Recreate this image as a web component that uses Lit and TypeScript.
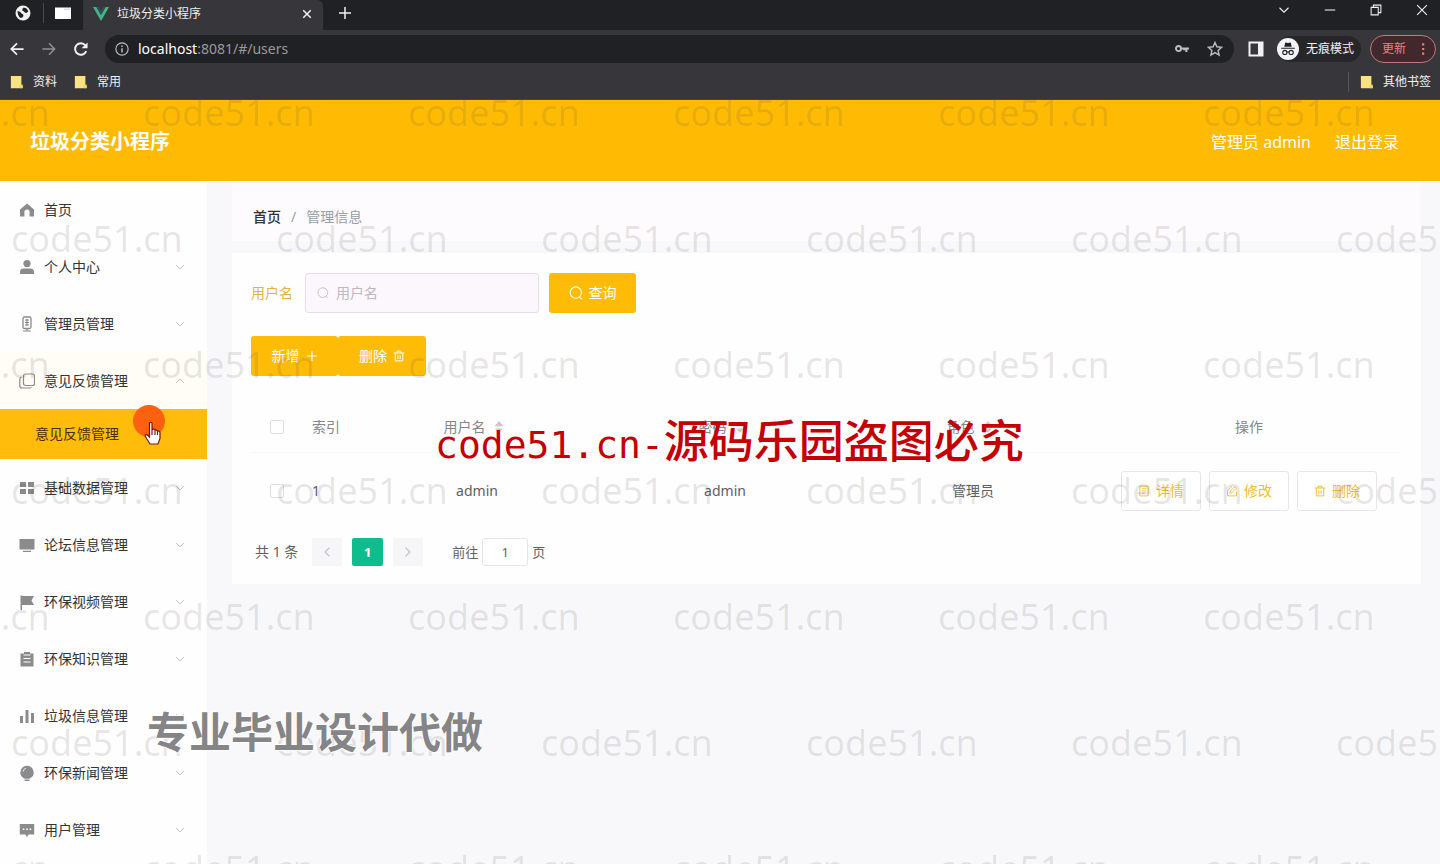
import { LitElement, html, css, svg, TemplateResult } from "lit";
import { customElement } from "lit/decorators.js";
import { classMap } from "lit/directives/class-map.js";

const shapes: Record<string, TemplateResult> = {
  home: svg`<path d="M8 1.500 1 7.600v6.900h4.400V10a2.600 2.600 0 0 1 5.200 0v4.500H15V7.600z" fill="currentColor"/>`,
  user: svg`<circle cx="8" cy="4.600" r="3.600" fill="currentColor"/><path d="M1 15v-2.200C1 10.600 2.800 9.500 4.600 9.500h6.800C13.200 9.500 15 10.600 15 12.800V15z" fill="currentColor"/>`,
  mic: svg`<rect x="4" y="1" width="8" height="11.500" rx="1.500" fill="none" stroke="currentColor" stroke-width="1.300"/><path d="M6 4h4M6 6.500h4M6 9h4M8 3v7M4 15h8M8 12v3" stroke="currentColor" stroke-width="1.200"/>`,
  copy: svg`<rect x="4.500" y="1" width="11" height="11.500" rx="2" fill="none" stroke="currentColor" stroke-width="1.200"/><path d="M2.500 4Q.8 4.500.8 6.500v6.200q0 2.300 2.300 2.300h7.400q1.500 0 2-.8" fill="none" stroke="currentColor" stroke-width="1.200"/>`,
  grid: svg`<path d="M1 2h6v5H1zM9 2h6v5H9zM1 9h6v5H1zM9 9h6v5H9z" fill="currentColor"/>`,
  monitor: svg`<path d="M.5 2h15v10.500H.5zM4 13.800h8v1.200H4z" fill="currentColor"/>`,
  flag: svg`<path d="M1.500 1.500H3V16H1.500zM3 2h12l-2.500 4.500L15 11H3z" fill="currentColor"/>`,
  clip: svg`<path d="M1.500 2.500H5V1h6v1.500h3.500v13h-13z" fill="currentColor"/><path d="M4.500 4h7M4.500 7.500h7M4.500 11h7" stroke="#fff"/>`,
  bars: svg`<path d="M1 8h3v7H1zM6.500 2h3v13h-3zM12 5h3v10h-3z" fill="currentColor"/>`,
  bulb: svg`<path d="M8 .8a6.700 6.700 0 0 0-4 12l1.800 1h4.400l1.800-1A6.700 6.700 0 0 0 8 .8zM5.500 14.600h5V16h-5z" fill="currentColor"/><path d="M4 6.500Q4.500 4 7 3.300" fill="none" stroke="#fff" stroke-width=".8"/>`,
  chat: svg`<path d="M.8 2h14.400v10.500H9.600L8 15l-1.600-2.500H.8z" fill="currentColor"/><path d="M3.800 7.200h1.600M7.200 7.200h1.600M10.600 7.200h1.600" stroke="#fff" stroke-width="1.500"/>`,
  down: svg`<path d="m2 5 6 6 6-6" fill="none" stroke="currentColor" stroke-width="1.500"/>`,
  up: svg`<path d="m2 11 6-6 6 6" fill="none" stroke="currentColor" stroke-width="1.500"/>`,
  left: svg`<path d="m12 1-7 7 7 7" fill="none" stroke="currentColor" stroke-width="2"/>`,
  right: svg`<path d="m4 1 7 7-7 7" fill="none" stroke="currentColor" stroke-width="2"/>`,
  search: svg`<circle cx="7.800" cy="7.500" r="6.500" fill="none" stroke="currentColor" stroke-width="1.200"/><path d="m11.500 12 3 3" stroke="currentColor" stroke-width="1.200"/>`,
  plus: svg`<path d="M8 1.500v13M1.500 8h13" stroke="currentColor" stroke-width="1.500"/>`,
  trash: svg`<path d="M1 4h14M5.500 4V1.500h5V4M3 4v10.500h10V4M6.500 7v5M9.500 7v5" fill="none" stroke="currentColor" stroke-width="1.300"/>`,
  doc: svg`<path d="M2.500 1.500h11v13h-11zM5 5h6M5 8h6M5 11h4" fill="none" stroke="currentColor" stroke-width="1.200"/>`,
  edit: svg`<path d="m8 2-6 5v7.500h12V9M5 11l1-3 5.500-5.500 2 2L8 10z" fill="none" stroke="currentColor" stroke-width="1.200"/>`,
  globe: svg`<circle cx="8" cy="8" r="7.500" fill="#f1f1f1"/><path d="M2.500 6q3 0 4 2.500 2 0 2 2.500-1.500 2.500-3 2Q2.500 10.500 2.500 6zM8 2.800Q12 2 13.300 6.500 11 9 9.500 7T7 5.500z" fill="#202124"/>`,
  window: svg`<path d="M0 2.500h16v11.500H0z" fill="#fff"/><path d="M9 4.200h6" stroke="#ccc"/>`,
  vue: svg`<path d="M0 1h3.400L8 9l4.600-8H16L8 15z" fill="#41b883"/><path d="M3.400 1H6l2 3.600L10 1h2.600L8 9z" fill="#35495e"/>`,
  close: svg`<path d="m3 3 10 10M13 3 3 13" stroke="currentColor" stroke-width="2"/>`,
  add: svg`<path d="M8 0v16M0 8h16" stroke="currentColor" stroke-width="2"/>`,
  back: svg`<path d="M15.500 8H2M8 1.500 1.500 8 8 14.500" fill="none" stroke="currentColor" stroke-width="2"/>`,
  forward: svg`<path d="M.5 8H14M8 1.500 14.500 8 8 14.500" fill="none" stroke="currentColor" stroke-width="1.700"/>`,
  reload: svg`<path d="M14 10.500A6.600 6.600 0 1 1 13 3.800" fill="none" stroke="currentColor" stroke-width="2.200"/><path d="M15.500.5v6.700H8.600z" fill="currentColor"/>`,
  info: svg`<circle cx="8" cy="8" r="7" fill="none" stroke="currentColor" stroke-width="1.300"/><path d="M8 7v5M8 4v1.700" stroke="currentColor" stroke-width="1.700"/>`,
  key: svg`<circle cx="4" cy="7.500" r="2.900" fill="none" stroke="currentColor" stroke-width="2.200"/><path d="M7 7.500h9M13 7.500v4M10.500 7.500v2" stroke="currentColor" stroke-width="2.400"/>`,
  star: svg`<path d="m8 1.500 1.900 4.300 4.700.5-3.500 3.100 1 4.600L8 11.600 3.900 14l1-4.600L1.400 6.300l4.700-.5z" fill="none" stroke="currentColor" stroke-width="1.400"/>`,
  panel: svg`<path d="M1.500 1.500h13v13h-13z" fill="none" stroke="currentColor" stroke-width="2"/><path d="M10 1.500h5v13h-5z" fill="currentColor"/>`,
  spy: svg`<circle cx="8" cy="8" r="8" fill="#f1f3f4"/><path d="M5.300 6.300 6 3.200l2 .4 2-.4.700 3.100zM3 7h10v.9H3z" fill="#202124"/><g fill="none" stroke="#202124" stroke-width=".8"><circle cx="5.700" cy="10.500" r="1.500"/><circle cx="10.300" cy="10.500" r="1.500"/><path d="M7.200 10.200h1.600"/></g>`,
  folder: svg`<path d="M1 1h12v10l1.500 1v3H1z" fill="#fbe384"/><path d="M11 11h3.500v4H11z" fill="#f2d361"/>`,
  min: svg`<path d="M1 8h14" stroke="currentColor" stroke-width="1.400"/>`,
  restore: svg`<path d="M1.500 4.500h9.500v10H1.500zM4.500 4.500V1.500h10V11.500H11" fill="none" stroke="currentColor" stroke-width="1.400"/>`,
  cross: svg`<path d="m1.500 1.500 13 13M14.500 1.500 1.500 14.500" stroke="currentColor" stroke-width="1.500"/>`,
  dots: svg`<path d="M7 1.500h2.400v2.400H7zM7 6.800h2.400v2.400H7zM7 12.100h2.400v2.400H7z" fill="currentColor"/>`,
  sort: svg`<path d="m8 0 6 7H2zM8 16l5-6H3z" fill="currentColor"/>`,
};

const icon = (name: string, size = "") =>
  html`<svg class=${"icon " + size} viewBox="0 0 16 16" aria-hidden="true">${shapes[name]}</svg>`;

const base = css`
  * { box-sizing: border-box; }
  button, input { font: inherit; color: inherit; margin: 0; }
  button { border: 0; padding: 0; background: none; cursor: pointer; }
  a { color: inherit; text-decoration: none; }
  .icon { width: 14px; height: 14px; flex: none; display: block; }
  .s10 { width: 10px; height: 10px; }
  .s12 { width: 12px; height: 12px; }
  .s16 { width: 16px; height: 16px; }
  .s22 { width: 22px; height: 22px; }
`;

@customElement("browser-bar")
class BrowserBar extends LitElement {
  static styles = [base, css`
    :host { display: block; background: #37373b; color: #f1f1f3; font-size: 12px; }
    .tabs { display: flex; height: 30px; background: #202124; }
    .pins { display: flex; align-items: center; width: 83px; padding: 0 12px 4px 15px; justify-content: space-between; }
    .pins i { width: 1px; height: 20px; background: #4a4a4e; }
    .tab { display: flex; align-items: center; width: 240px; padding: 0 10px 3px 10px; gap: 8px; background: #37373b; border-radius: 0 6px 0 0; }
    .tab span { flex: 1; }
    .new { padding: 0 16px 4px; }
    .controls { display: flex; margin-left: auto; gap: 34px; padding: 0 12px 10px 0; align-items: center; }
    .tools { display: flex; align-items: center; height: 38px; padding: 0 4px 0 10px; }
    .nav { display: flex; gap: 18px; width: 95px; }
    .dim { color: #919194; }
    .address { display: flex; align-items: center; flex: 1; height: 28px; border-radius: 14px; background: #202125; padding: 0 11px 0 10px; gap: 9px; color: #bdbdc1; }
    .address p { margin: 0; flex: 1; font-size: 14px; color: #9a9a9e; }
    .address b { font-weight: 400; color: #fff; }
    .address .key { margin-right: 9px; }
    .panel { margin: 0 13px 0 14px; }
    .private { display: flex; align-items: center; gap: 7px; height: 26px; padding-right: 7px; border-radius: 13px; background: #27272a; }
    .update { display: flex; align-items: center; height: 28px; border: 1px solid #c5777b; border-radius: 14px; color: #f0817d; padding: 0 5px 0 11px; gap: 10px; margin-left: 9px; background: #40282c; }
    .marks { display: flex; align-items: center; height: 32px; padding: 0 9px 4px 10px; gap: 17px; border-bottom: 1px solid #4b412f; }
    .marks a { display: flex; align-items: center; gap: 9px; }
    .marks .other { margin-left: auto; padding-left: 11px; border-left: 1px solid #57575b; }
  `];

  render() {
    return html`
      <div class="tabs">
        <div class="pins">${icon("globe", "s16")}<i></i>${icon("window", "s16")}</div>
        <div class="tab">${icon("vue", "s16")}<span>垃圾分类小程序</span><button aria-label="关闭标签页">${icon("close", "s12")}</button></div>
        <button class="new" aria-label="新标签页">${icon("add", "s12")}</button>
        <div class="controls">
          <button aria-label="标签搜索">${icon("down", "s12")}</button><button aria-label="最小化">${icon("min", "s12")}</button>
          <button aria-label="还原">${icon("restore", "s12")}</button><button aria-label="关闭">${icon("cross", "s12")}</button>
        </div>
      </div>
      <div class="tools">
        <div class="nav"><button aria-label="后退">${icon("back")}</button><button class="dim" aria-label="前进">${icon("forward")}</button><button aria-label="刷新">${icon("reload")}</button></div>
        <div class="address">${icon("info")}<p><b>localhost</b>:8081/#/users</p><button class="key" aria-label="密码">${icon("key")}</button><button aria-label="收藏">${icon("star", "s16")}</button></div>
        <button class="panel" aria-label="侧边栏">${icon("panel", "s16")}</button>
        <button class="private">${icon("spy", "s22")}<span>无痕模式</span></button>
        <button class="update"><span>更新</span>${icon("dots")}</button>
      </div>
      <div class="marks">
        <a href="#">${icon("folder")}资料</a><a href="#">${icon("folder")}常用</a><a class="other" href="#">${icon("folder")}其他书签</a>
      </div>`;
  }
}

const menu: [string, string][] = [
  ["home", "首页"], ["user", "个人中心"], ["mic", "管理员管理"], ["copy", "意见反馈管理"],
  ["grid", "基础数据管理"], ["monitor", "论坛信息管理"], ["flag", "环保视频管理"], ["clip", "环保知识管理"],
  ["bars", "垃圾信息管理"], ["bulb", "环保新闻管理"], ["chat", "用户管理"],
];

@customElement("side-menu")
class SideMenu extends LitElement {
  static styles = [base, css`
    :host { display: block; width: 207px; flex: none; background: #fefefe; color: #333; font-size: 14px; }
    .item { display: flex; align-items: center; width: 100%; height: 57px; padding: 0 22px 0 19px; gap: 9px; text-align: left; }
    .item span { flex: 1; }
    .item .icon { color: #8b8b8e; }
    .item .s10 { color: #b5b5b8; }
    .open { background: #fffdf5; }
    .sub { display: flex; align-items: center; height: 50px; padding-left: 35px; background: #ffbc0a; color: #4a2c00; }
  `];

  render() {
    return html`<nav>${menu.map(([glyph, label]) => {
      const open = glyph === "copy";
      return html`
        <button class=${classMap({ item: true, open })}>
          ${icon(glyph, "s16")}<span>${label}</span>${glyph === "home" ? "" : icon(open ? "up" : "down", "s10")}
        </button>
        ${open ? html`<a class="sub" href="#/feedback">意见反馈管理</a>` : ""}`;
    })}</nav>`;
  }
}

@customElement("user-list")
class UserList extends LitElement {
  static styles = [base, css`
    :host { display: block; flex: 1; min-width: 0; padding: 0 19px 0 25px; font-size: 14px; color: #5f6064; }
    .crumbs { display: flex; align-items: center; height: 60px; padding: 12px 20px 0 21px; gap: 10px; background: #fefbfe; color: #999ba5; }
    .crumbs a { color: #303133; font-weight: 500; }
    .card { margin-top: 12px; padding: 20px 20px 18px 19px; background: #fefefe; }
    .row { display: flex; align-items: center; height: 40px; }
    .row label { color: #e3b53c; }
    .field { display: flex; align-items: center; width: 234px; height: 40px; margin: 0 10px 0 12px; padding: 0 11px; gap: 7px; border: 1px solid #e9dee8; border-radius: 3px; background: #fcf7fc; color: #c3bcc5; }
    .field input { flex: 1; min-width: 0; border: 0; padding: 0; outline: 0; background: none; }
    .field input::placeholder { color: #bdb7bf; }
    .primary { display: flex; align-items: center; justify-content: center; gap: 6px; width: 87px; height: 40px; border-radius: 3px; background: #ffbc07; color: #fff; }
    .actions { margin-top: 23px; }
    .actions .primary + .primary { width: 88px; }
    table { width: 100%; margin-top: 26px; border-collapse: collapse; table-layout: fixed; }
    th { height: 50px; font-weight: 400; color: #85868b; border-bottom: 1px solid #f6f5f7; padding: 0; }
    td { height: 77px; padding: 0; text-align: center; }
    .pick { width: 52px; text-align: center; }
    .index { width: 50px; text-align: left; padding-left: 9px; }
    .ops { width: 304px; }
    .sort { display: inline-flex; align-items: center; gap: 7px; padding-right: 6px; color: #c7c9ce; }
    .sort span { color: #85868b; }
    .check { appearance: none; display: block; width: 14px; height: 14px; margin: 0 auto; border: 1px solid #dcdee4; border-radius: 2px; background: #fff; }
    .buttons { display: flex; justify-content: center; gap: 8px; }
    .plain { display: flex; align-items: center; justify-content: center; gap: 6px; width: 80px; height: 40px; border: 1px solid #e6e6ec; border-radius: 3px; color: #f3bd25; background: #fff; }
    .pages { display: flex; align-items: center; height: 28px; margin: 9px 0 0 4px; font-size: 13px; }
    .step { display: grid; place-items: center; width: 30px; height: 28px; border-radius: 2px; background: #f6f5f7; color: #c0c2c8; }
    .total { margin-right: 14px; font-size: 14px; }
    .current { margin: 0 10px; width: 31px; background: #0fbd8c; color: #fff; font-weight: 700; }
    .jump { display: flex; align-items: center; gap: 4px; margin-left: 29px; }
    .jump input { width: 46px; height: 28px; border: 1px solid #e4e5ea; border-radius: 3px; text-align: center; background: #fff; }
  `];

  render() {
    const sortable = (label: string) => html`<th><button class="sort"><span>${label}</span>${icon("sort", "s12")}</button></th>`;
    return html`
      <nav class="crumbs"><a href="#/">首页</a><span>/</span><span>管理信息</span></nav>
      <section class="card">
        <form class="row">
          <label for="name">用户名</label>
          <div class="field">${icon("search", "s12")}<input id="name" type="text" placeholder="用户名" /></div>
          <button class="primary" type="button">${icon("search")}查询</button>
        </form>
        <div class="row actions"><button class="primary">新增${icon("plus", "s12")}</button><button class="primary">删除${icon("trash", "s12")}</button></div>
        <table>
          <thead><tr>
            <th class="pick"><input class="check" type="checkbox" aria-label="全选" /></th><th class="index">索引</th>
            ${sortable("用户名")}${sortable("密码")}${sortable("角色")}<th class="ops">操作</th>
          </tr></thead>
          <tbody><tr>
            <td><input class="check" type="checkbox" aria-label="选择 admin" /></td><td class="index">1</td>
            <td>admin</td><td>admin</td><td>管理员</td>
            <td><div class="buttons">
              <button class="plain">${icon("doc", "s12")}详情</button><button class="plain">${icon("edit", "s12")}修改</button><button class="plain">${icon("trash", "s12")}删除</button>
            </div></td>
          </tr></tbody>
        </table>
        <div class="pages">
          <span class="total">共 1 条</span>
          <button class="step" aria-label="上一页">${icon("left", "s10")}</button><button class="step current">1</button><button class="step" aria-label="下一页">${icon("right", "s10")}</button>
          <label class="jump">前往<input type="text" value="1" />页</label>
        </div>
      </section>`;
  }
}

@customElement("app-root")
class AppRoot extends LitElement {
  static styles = [base, css`
    :host { display: flex; flex-direction: column; position: relative; height: 100vh; overflow: hidden; background: #f8f8fb; font-family: "Noto Sans", "Noto Sans CJK SC", sans-serif; line-height: 20px; }
    .head { display: flex; align-items: center; height: 81px; flex: none; padding: 2px 41px 0 30px; background: #ffbb04; color: #fff; font-size: 16px; gap: 24px; }
    .head h1 { margin: 0 auto 0 0; font-size: 20px; font-weight: 700; }
    .body { display: flex; flex: 1; min-height: 0; }
    .marks { position: absolute; inset: 100px 0 0; overflow: hidden; pointer-events: none; font-family: "Noto Sans", sans-serif; font-size: 36px; font-weight: 400; line-height: 26px; color: rgba(70, 60, 60, 0.12); }
    .line { display: flex; height: 126px; margin-left: -122px; }
    .line:nth-child(even) { margin-left: 11px; }
    .line span { flex: none; width: 265px; }
    .notice { position: absolute; left: 435px; top: 413px; display: flex; align-items: baseline; color: #c40006; font-family: "Noto Sans CJK SC", sans-serif; font-size: 45px; font-weight: 500; line-height: 52px; white-space: nowrap; pointer-events: none; }
    .latin { font-family: "DejaVu Sans Mono", monospace; font-size: 38px; font-weight: 400; }
    .caption { position: absolute; left: 147px; top: 707px; color: #858588; font-size: 42px; line-height: 50px; font-weight: 700; white-space: nowrap; pointer-events: none; text-shadow: 0 0 2px #fff, 1px 1px 0 #fff, -1px -1px 0 #fff; }
    .pointer { position: absolute; left: 133px; top: 405px; width: 32px; height: 42px; pointer-events: none; }
  `];

  render() {
    return html`
      <browser-bar></browser-bar>
      <header class="head"><h1>垃圾分类小程序</h1><span>管理员 admin</span><a href="#/login">退出登录</a></header>
      <main class="body"><side-menu></side-menu><user-list></user-list></main>
      <div class="marks" aria-hidden="true">
        ${Array.from({ length: 7 }, () => html`<div class="line">${Array.from({ length: 6 }, () => html`<span>code51.cn</span>`)}</div>`)}
      </div>
      <div class="caption">专业毕业设计代做</div>
      <svg class="pointer" viewBox="0 0 32 42" aria-hidden="true">
        <circle cx="16" cy="16" r="16" fill="#fb610f" />
        <path d="M16.500 18q1.500-1.500 2.500 0v7l1-1q1.500-.5 2 1 1.500-.8 2.500 1 2-.5 2.500 1.500v6l-2 5.500h-8l-5-8q.5-2.500 3-.5l1.500 1.500z" fill="#fff" />
        <path d="M19 25v5M22 25v5M24.500 26v4M12 31q.5-2.500 3-.5l1.500 1.500V18q1.500-1.500 2.500 0v7l1-1q1.500-.5 2 1 1.500-.8 2.500 1 2-.5 2.500 1.500v6l-2 5.500h-8z" fill="none" stroke="#7b1515" stroke-width="1.200" />
      </svg>
      <div class="notice"><span class="latin">code51.cn-</span><span>源码乐园盗图必究</span></div>`;
  }
}
